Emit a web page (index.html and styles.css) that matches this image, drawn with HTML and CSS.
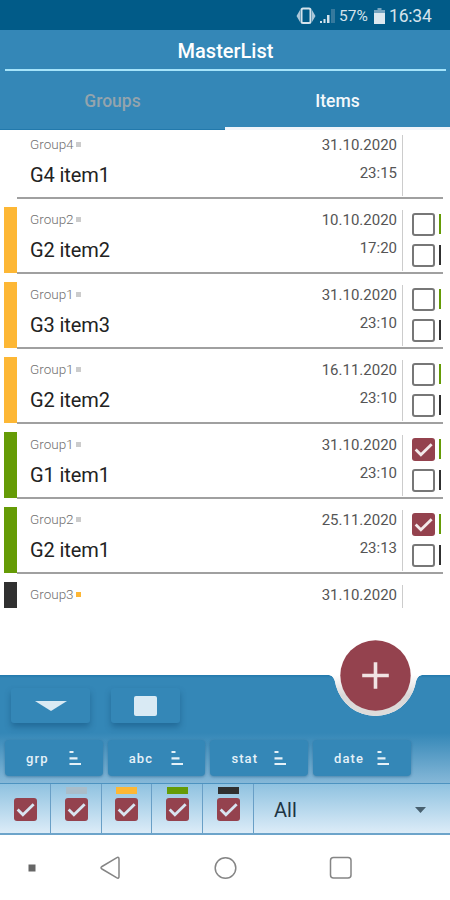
FILE: index.html
```
<!DOCTYPE html>
<html lang="en">
<head>
  <meta charset="UTF-8">
  <meta name="viewport" content="width=device-width, initial-scale=1.0">
  <title>MasterList</title>
  <link rel="stylesheet" href="styles.css">
</head>
<body>
  <!-- shared icons -->
  <svg class="defs" width="0" height="0">
    <symbol id="tick" viewBox="0 0 22 22">
      <path d="M3.500 11l5 5L18.800 6" fill="none" stroke="currentColor" stroke-width="2.700"/>
    </symbol>
    <symbol id="sort" viewBox="0 0 12 16">
      <path d="M0.500 2h4M0.500 8.300h8M0.500 14h11.500" fill="none" stroke="currentColor" stroke-width="2.200"/>
    </symbol>
  </svg>

  <div class="status">
    <svg class="vibrate" width="20" height="18" viewBox="0 0 20 18">
      <path d="M4 3L0.500 9L4 15zM16 3l3.500 6L16 15z" fill="#a9c6d8"/>
      <rect x="5.500" y="1.500" width="9" height="14.500" rx="1.500" fill="#015b88" stroke="#d5e3ec" stroke-width="2"/>
    </svg>
    <svg class="signal" width="16" height="16" viewBox="0 0 16 16">
      <path d="M0 13h2v2H0zM3.500 11h2v4h-2zM7 7h2.500v8H7z" fill="#d5e3ec"/>
      <path d="M11 1h4v14h-4z" fill="#35799d"/>
    </svg>
    <span class="percent">57%</span>
    <svg class="battery" width="11" height="16" viewBox="0 0 11 16">
      <path d="M3.500 0h4v2H11v4H0V2h3.500z" fill="#76a4bf"/>
      <path d="M0 5h11v11H0z" fill="#dce8ef"/>
    </svg>
    <span class="clock">16:34</span>
  </div>

  <div class="header">
    <div class="title">MasterList</div>
    <div class="tabs">
      <div class="tab">Groups</div>
      <div class="tab active">Items</div>
    </div>
  </div>

  <div class="list">
    <div class="item">
      <div class="mark"></div>
      <div class="body">
        <div class="text"><div class="group">Group4<i></i></div><div class="name">G4 item1</div></div>
        <div class="date"><div>31.10.2020</div><div class="time">23:15</div></div>
        <div class="checks"></div>
      </div>
    </div>
    <div class="item">
      <div class="mark orange"></div>
      <div class="body">
        <div class="text"><div class="group">Group2<i></i></div><div class="name">G2 item2</div></div>
        <div class="date"><div>10.10.2020</div><div class="time">17:20</div></div>
        <div class="checks">
          <div class="check"><span class="box"></span><b class="green"></b></div>
          <div class="check"><span class="box"></span><b class="black"></b></div>
        </div>
      </div>
    </div>
    <div class="item">
      <div class="mark orange"></div>
      <div class="body">
        <div class="text"><div class="group">Group1<i></i></div><div class="name">G3 item3</div></div>
        <div class="date"><div>31.10.2020</div><div class="time">23:10</div></div>
        <div class="checks">
          <div class="check"><span class="box"></span><b class="green"></b></div>
          <div class="check"><span class="box"></span><b class="black"></b></div>
        </div>
      </div>
    </div>
    <div class="item">
      <div class="mark orange"></div>
      <div class="body">
        <div class="text"><div class="group">Group1<i></i></div><div class="name">G2 item2</div></div>
        <div class="date"><div>16.11.2020</div><div class="time">23:10</div></div>
        <div class="checks">
          <div class="check"><span class="box"></span><b class="green"></b></div>
          <div class="check"><span class="box"></span><b class="black"></b></div>
        </div>
      </div>
    </div>
    <div class="item">
      <div class="mark green"></div>
      <div class="body">
        <div class="text"><div class="group">Group1<i></i></div><div class="name">G1 item1</div></div>
        <div class="date"><div>31.10.2020</div><div class="time">23:10</div></div>
        <div class="checks">
          <div class="check"><span class="box on"><svg><use href="#tick"/></svg></span><b class="green"></b></div>
          <div class="check"><span class="box"></span><b class="black"></b></div>
        </div>
      </div>
    </div>
    <div class="item">
      <div class="mark green"></div>
      <div class="body">
        <div class="text"><div class="group">Group2<i></i></div><div class="name">G2 item1</div></div>
        <div class="date"><div>25.11.2020</div><div class="time">23:13</div></div>
        <div class="checks">
          <div class="check"><span class="box on"><svg><use href="#tick"/></svg></span><b class="green"></b></div>
          <div class="check"><span class="box"></span><b class="black"></b></div>
        </div>
      </div>
    </div>
    <div class="item last">
      <div class="mark black"></div>
      <div class="body">
        <div class="text"><div class="group">Group3<i class="orange"></i></div></div>
        <div class="date"><div>31.10.2020</div></div>
        <div class="checks"></div>
      </div>
    </div>
  </div>

  <div class="panel">
    <!-- notch and round add button over the panel edge -->
    <svg class="add" width="100" height="90" viewBox="0 0 100 90">
      <defs>
        <linearGradient id="notch" x1="0" y1="0" x2="0" y2="1">
          <stop offset="0" stop-color="#ffffff"/>
          <stop offset="0.500" stop-color="#d9d8d8"/>
          <stop offset="1" stop-color="#dfdcda"/>
        </linearGradient>
      </defs>
      <path d="M2 35V39.800C8 40 9.500 43 11 51A41 41 0 0 0 90 51C91.500 43 93 40 99 39.800V35z" fill="#fff"/>
      <path d="M2 39.800C8 40 9.500 43 11 51A41 41 0 0 0 90 51C91.500 43 93 40 99 39.800z" fill="url(#notch)"/>
      <circle cx="50.500" cy="40.500" r="35.200" fill="#94424e"/>
      <path d="M37.200 40.500h26.600M50.500 27.200v26.600" stroke="#f1e3e3" stroke-width="3.600"/>
    </svg>
    <div class="tools">
      <div class="tool"><svg width="32" height="10" viewBox="0 0 32 10"><path d="M0 0h32L16 10z" fill="#d9eaf4"/></svg></div>
      <div class="tool small"><svg width="23" height="20" viewBox="0 0 23 20"><rect width="23" height="20" rx="2" fill="#d9eaf4"/></svg></div>
    </div>
    <div class="sorts">
      <div class="sort"><span>grp</span><svg><use href="#sort"/></svg></div>
      <div class="sort"><span>abc</span><svg><use href="#sort"/></svg></div>
      <div class="sort"><span>stat</span><svg><use href="#sort"/></svg></div>
      <div class="sort"><span>date</span><svg><use href="#sort"/></svg></div>
    </div>
    <div class="filters">
      <div class="filter"><em></em><span class="box on"><svg><use href="#tick"/></svg></span></div>
      <div class="filter"><em class="gray"></em><span class="box on"><svg><use href="#tick"/></svg></span></div>
      <div class="filter"><em class="orange"></em><span class="box on"><svg><use href="#tick"/></svg></span></div>
      <div class="filter"><em class="green"></em><span class="box on"><svg><use href="#tick"/></svg></span></div>
      <div class="filter"><em class="black"></em><span class="box on"><svg><use href="#tick"/></svg></span></div>
      <div class="select">
        <span>All</span>
        <svg width="11" height="6" viewBox="0 0 11 6"><path d="M0 0h11L5.500 6z" fill="#48606f"/></svg>
      </div>
    </div>
  </div>

  <div class="nav">
    <svg width="450" height="65" viewBox="0 0 450 65" fill="none" stroke="#858585" stroke-width="1.500">
      <rect x="28.500" y="29.500" width="7" height="7" fill="#666" stroke="none"/>
      <path d="M102 31.500L116.500 22.800Q119 21.500 119 24V41.500Q119 44 116.500 42.700L102 34Q100 32.700 102 31.500z"/>
      <circle cx="225.500" cy="33" r="10.300"/>
      <rect x="330.500" y="22.500" width="20.500" height="20.500" rx="3"/>
    </svg>
  </div>
</body>
</html>
```

FILE: styles.css
```
* {
  box-sizing: border-box;
}
body {
  margin: 0;
  width: 450px;
  height: 900px;
  overflow: hidden;
  background: #fff;
  font-family: Roboto, "Liberation Sans", sans-serif;
}
.defs {
  position: absolute;
}
.orange {
  background: #fdb735;
}
.green {
  background: #659b06;
}
.black {
  background: #303030;
}
.gray {
  background: #a9bdca;
}

/* status bar */
.status {
  height: 30px;
  background: #015b88;
  color: #d5e3ec;
  display: flex;
  align-items: center;
  padding: 2px 0 0 296px;
}
.signal {
  margin-left: 4px;
}
.percent {
  width: 30px;
  margin-left: 3px;
  font-size: 15.5px;
}
.battery {
  margin-left: 5px;
}
.clock {
  margin-left: 4px;
  font-size: 17.5px;
  letter-spacing: -0.2px;
}

/* header */
.header {
  height: 100px;
  padding: 0 4px 0 5px;
  background: #3487b7;
}
.title {
  height: 41px;
  border-bottom: 2px solid #a5e4fa;
  color: #fff;
  font-size: 20px;
  font-weight: 500;
  line-height: 43px;
  text-align: center;
}
.tabs {
  display: flex;
  height: 59px;
  margin: 0 -4px 0 -5px;
}
.tab {
  flex: 1;
  color: #94a4ad;
  font-size: 17.5px;
  font-weight: 500;
  line-height: 61px;
  text-align: center;
  border-bottom: 1px solid #2279ac;
}
.tab.active {
  color: #f3f8fb;
  border-bottom: 3px solid #f0f5fa;
}

/* list */
.list {
  height: 545px;
  padding-top: 2px;
}
.item {
  display: flex;
  height: 67px;
  margin: 0 7px 8px 4px;
}
.mark {
  width: 13px;
  height: 66px;
}
.body {
  flex: 1;
  display: flex;
  padding-left: 13px;
  border-bottom: 2px solid #a0a0a0;
}
.text {
  flex: 1;
}
.group {
  display: flex;
  align-items: center;
  height: 24px;
  color: #707070;
  font-size: 13.5px;
  font-weight: 300;
}
.group i {
  width: 5px;
  height: 5px;
  margin-left: 2px;
  background-color: #ccc;
}
.group i.orange {
  background-color: #fdb735;
}
.name {
  margin-top: 7px;
  color: #222;
  font-size: 20px;
  line-height: 24px;
  letter-spacing: -0.1px;
}
.date {
  padding: 4px 5px 0 0;
  color: #555;
  font-size: 15px;
  line-height: 18px;
  text-align: right;
}
.time {
  margin-top: 10px;
}
.checks {
  width: 41px;
  height: 61px;
  margin-top: 3px;
  padding: 3px 0 0 9px;
  border-left: 1px solid #ccc;
}
.check {
  display: flex;
  align-items: center;
  justify-content: space-between;
  width: 29px;
  height: 22px;
  margin-bottom: 9px;
}
.check b {
  width: 2px;
  height: 20px;
}
.box {
  display: block;
  width: 23px;
  height: 23px;
  border: 2px solid #777;
  border-radius: 3px;
}
.box.on {
  border: 0;
  background: #94424e;
  color: #f3e9ea;
}
.box svg {
  display: block;
  width: 23px;
  height: 23px;
}
.last {
  height: 26px;
  margin-bottom: 0;
  overflow: hidden;
}
.last .body {
  border: 0;
}

/* bottom panel */
.panel {
  position: relative;
  height: 160px;
  background: linear-gradient(#2279ac 0, #3487b7 3px, #3487b7 58px, #86b8d8 108px);
}
.add {
  position: absolute;
  left: 325px;
  top: -40px;
}
.tools {
  display: flex;
  gap: 21px;
  height: 65px;
  padding: 13px 11px 0;
}
.tool {
  display: flex;
  align-items: center;
  justify-content: center;
  width: 79px;
  height: 35px;
  border-radius: 3px;
  background: #3487b7;
  box-shadow: 0 4px 6px rgba(0, 55, 95, 0.35);
}
.tool.small {
  width: 69px;
}
.sorts {
  display: flex;
  gap: 5px;
  height: 43px;
  padding-left: 5px;
}
.sort {
  display: flex;
  align-items: center;
  justify-content: space-between;
  width: 97.7px;
  height: 36px;
  padding: 0 22px 0 21px;
  border-radius: 4px;
  background: #3487b7;
  box-shadow: 0 1px 3px rgba(0, 65, 110, 0.4);
  color: #e5f1f8;
  font-size: 13px;
  font-weight: 500;
  letter-spacing: 1.1px;
}
.sort svg {
  width: 12px;
  height: 16px;
}
.filters {
  display: flex;
  height: 52px;
  border-top: 1px solid #4d93c0;
  border-bottom: 2px solid #6da4ca;
  background: linear-gradient(#8fc2e0, #dcecf8);
}
.filter {
  display: flex;
  flex-direction: column;
  align-items: center;
  width: 50.8px;
  padding: 3px 0 0 1px;
  border-right: 1px solid #699fc6;
}
.filter em {
  width: 21px;
  height: 7px;
  margin-bottom: 4px;
}
.filter .box.on {
  color: #d8e5f1;
}
.select {
  flex: 1;
  display: flex;
  align-items: center;
  justify-content: space-between;
  padding: 3px 24px 0 20px;
  color: #1d3443;
  font-size: 20px;
}

.nav {
  height: 65px;
}
```
